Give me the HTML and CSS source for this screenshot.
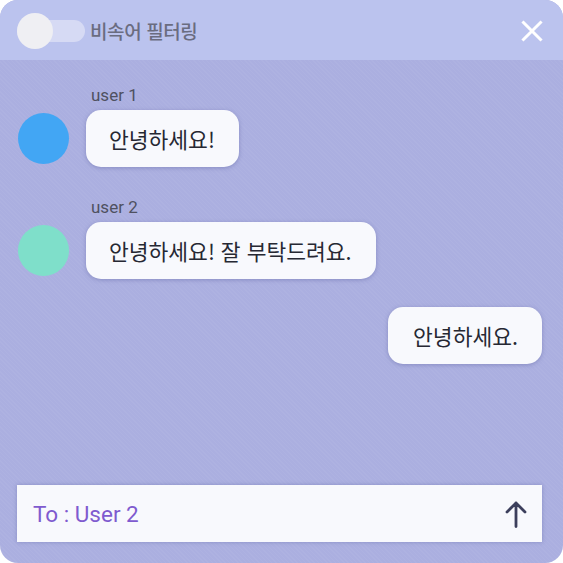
FILE: index.html
```html
<!DOCTYPE html>
<html lang="ko">
<head>
<meta charset="utf-8">
<link rel="stylesheet" href="styles.css">
</head>
<body>
<div class="chat">
  <header class="top">
    <div class="filter">
      <div class="toggle"><span class="knob"></span></div>
      <span class="filter-label">비속어 필터링</span>
    </div>
    <button class="close" aria-label="닫기">
      <svg width="22" height="22" viewBox="0 0 22 22"><path d="M2.5 2.5 L19.5 19.5 M19.5 2.5 L2.5 19.5" stroke="#fff" stroke-width="3" stroke-linecap="square"/></svg>
    </button>
  </header>
  <main class="messages">
    <div class="msg">
      <div class="name">user 1</div>
      <div class="row">
        <span class="avatar blue"></span>
        <div class="bubble">안녕하세요!</div>
      </div>
    </div>
    <div class="msg">
      <div class="name">user 2</div>
      <div class="row">
        <span class="avatar teal"></span>
        <div class="bubble">안녕하세요! 잘 부탁드려요.</div>
      </div>
    </div>
    <div class="msg mine">
      <div class="bubble">안녕하세요.</div>
    </div>
  </main>
  <footer class="composer">
    <div class="input">
      <span class="to">To : User 2</span>
      <svg class="send" width="22" height="28" viewBox="0 0 22 28"><path d="M11 26.5 V3 M2 12 L11 3 L20 12" fill="none" stroke="#3c3f5c" stroke-width="2.8" stroke-linecap="round" stroke-linejoin="round"/></svg>
    </div>
  </footer>
</div>
</body>
</html>
```
FILE: styles.css
```css
html, body {
  margin: 0;
  padding: 0;
  background: #ffffff;
}
body {
  font-family: Roboto, "Noto Sans CJK KR", sans-serif;
}
.chat {
  width: 563px;
  height: 563px;
  border-radius: 18px;
  overflow: hidden;
  background-color: #abafe0;
  background-image: repeating-linear-gradient(45deg, rgba(255,255,255,0.04) 0 1px, rgba(0,0,0,0) 1px 3px);
  display: flex;
  flex-direction: column;
}
.top {
  height: 60px;
  flex: none;
  background: #bbc3ee;
  display: flex;
  align-items: center;
  justify-content: space-between;
  padding: 0 20px 0 17px;
}
.filter {
  display: flex;
  align-items: center;
  gap: 5px;
}
.toggle {
  width: 68px;
  height: 22px;
  border-radius: 11px;
  background: #d6daf4;
  position: relative;
  margin-top: 1px;
}
.knob {
  position: absolute;
  left: 0;
  top: -7px;
  width: 36px;
  height: 36px;
  border-radius: 50%;
  background: #efeff3;
}
.filter-label {
  font-family: "Noto Sans CJK KR", sans-serif;
  font-size: 19px;
  font-weight: 500;
  color: #6a6c80;
  letter-spacing: -0.4px;
}
.close {
  border: 0;
  background: none;
  padding: 0;
  display: flex;
  margin-top: 2px;
}
.messages {
  flex: 1;
  display: flex;
  flex-direction: column;
  padding: 25px 21px 0 18px;
}
.msg {
  display: flex;
  flex-direction: column;
}
.msg + .msg {
  margin-top: 30px;
}
.name {
  margin-left: 73px;
  font-size: 17px;
  color: #4f5160;
  line-height: 21px;
}
.row {
  display: flex;
  align-items: center;
  gap: 17px;
  margin-top: 4px;
}
.avatar {
  width: 51px;
  height: 51px;
  border-radius: 50%;
  flex: none;
}
.avatar.blue { background: #42a6f4; }
.avatar.teal { background: #7fdfca; }
.bubble {
  background: #f8f9fd;
  border-radius: 15px;
  height: 57px;
  box-sizing: border-box;
  padding: 0 24px 0 23px;
  display: flex;
  align-items: center;
  font-family: "Noto Sans CJK KR", sans-serif;
  font-size: 21.5px;
  font-weight: 400;
  color: #262833;
  box-shadow: 0 1px 4px rgba(70, 75, 140, 0.35);
}
.mine {
  align-items: flex-end;
}
.mine.msg {
  margin-top: 28px;
}
.mine .bubble {
  padding: 0 24px 0 25px;
}
.composer {
  flex: none;
  padding: 0 21px 21px 17px;
}
.input {
  height: 57px;
  background: #f8f9fd;
  display: flex;
  align-items: center;
  justify-content: space-between;
  padding: 0 15px 0 16px;
  box-shadow: 0 0 4px rgba(70, 75, 140, 0.35);
}
.to {
  font-size: 22.5px;
  color: #7f5bcf;
}
```
